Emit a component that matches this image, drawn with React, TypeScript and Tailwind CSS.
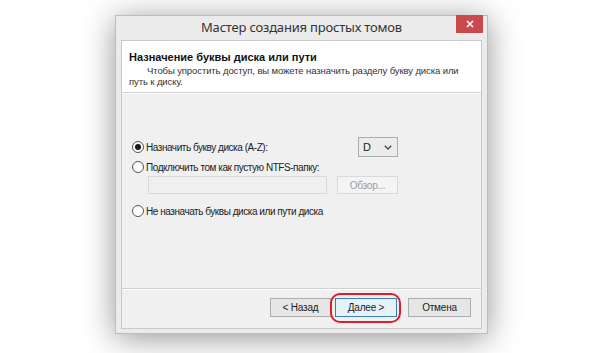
import React from "react";

const Radio: React.FC<{ checked?: boolean }> = ({ checked }) => (
  <span className="flex h-[12px] w-[12px] shrink-0 items-center justify-center rounded-full border border-[#555] bg-white">
    {checked && <span className="h-[6px] w-[6px] rounded-full bg-[#1a1a1a]" />}
  </span>
);

const Button: React.FC<{ label: string; width: string; focused?: boolean }> = ({
  label,
  width,
  focused,
}) => (
  <div
    className={`flex h-[19px] items-center justify-center border text-[10px] tracking-[-0.2px] text-[#222] ${width} ${
      focused ? "border-[#3c7fb1] bg-[#e5f1fb]" : "border-[#adadad] bg-[#e6e6e6]"
    }`}
  >
    {label}
  </div>
);

const App: React.FC = () => {
  return (
    <div
      className="h-[353px] w-[600px] overflow-hidden bg-white pt-[15px] pl-[115px]"
      style={{ fontFamily: '"Liberation Sans", Arial, sans-serif' }}
    >
      <div className="flex h-[319px] w-[373px] flex-col border border-[#bcbcbc] bg-[#ebebeb] shadow-[0_4px_30px_rgba(0,0,0,0.42)]">
        {/* title bar */}
        <div className="relative flex h-[24px] shrink-0 items-center justify-center">
          <span
            className="text-[13px] tracking-[-0.2px] text-[#333]"
            style={{ fontFamily: '"Noto Sans", "Open Sans", sans-serif' }}
          >
            Мастер создания простых томов
          </span>
          <div className="absolute top-[-1px] right-[4px] flex h-[18px] w-[27px] items-center justify-center bg-[#c9494c]">
            <svg width="8" height="8" viewBox="0 0 8 8">
              <path d="M1 1 L7 7 M7 1 L1 7" stroke="white" strokeWidth="1.6" />
            </svg>
          </div>
        </div>

        {/* client area */}
        <div className="mx-[5px] mb-[4px] flex flex-1 flex-col border border-[#c9c9c9] bg-[#f0f0f0]">
          {/* header */}
          <div className="h-[51px] shrink-0 bg-white pt-[10px] pl-[7px]">
            <div className="text-[11px] font-bold leading-[13px] text-[#111]">
              Назначение буквы диска или пути
            </div>
            <div className="mt-[1px] whitespace-nowrap text-[9.5px] leading-[11px] tracking-[-0.1px] text-[#333]">
              <div className="pl-[18px]">
                Чтобы упростить доступ, вы можете назначить разделу букву диска или
              </div>
              <div>путь к диску.</div>
            </div>
          </div>
          <div className="h-px shrink-0 bg-[#cfcfcf]" />
          <div className="h-px shrink-0 bg-white" />

          {/* body */}
          <div className="flex-1 pt-[43px] pl-[10px] text-[10px] tracking-[-0.45px] text-[#222]">
            <div className="w-[266px]">
              <div className="flex h-[20px] items-center justify-between">
                <div className="flex items-center gap-[2px]">
                  <Radio checked />
                  <span>Назначить букву диска (A-Z):</span>
                </div>
                <div className="flex h-[20px] w-[40px] items-center justify-between border border-[#acacac] bg-[#ececec] pr-[5px] pl-[4px]">
                  <span className="text-[11px] tracking-normal">D</span>
                  <svg width="8" height="5" viewBox="0 0 8 5">
                    <path d="M0.8 0.8 L4 4 L7.2 0.8" stroke="#444" strokeWidth="1.3" fill="none" />
                  </svg>
                </div>
              </div>
              <div className="mt-[3px] flex h-[14px] items-center gap-[2px]">
                <Radio />
                <span>Подключить том как пустую NTFS-папку:</span>
              </div>
              <div className="mt-[2px] flex gap-[10px] pl-[16px]">
                <div className="h-[18px] w-[179px] border border-[#d9d9d9] bg-[#f0f0f0]" />
                <div className="flex h-[18px] w-[61px] items-center justify-center border border-[#d9d9d9] bg-[#f4f4f4] tracking-[-0.2px] text-[#9a9a9a]">
                  Обзор...
                </div>
              </div>
              <div className="mt-[10px] flex h-[14px] items-center gap-[2px]">
                <Radio />
                <span>Не назначать буквы диска или пути диска</span>
              </div>
            </div>
          </div>

          <div className="h-px shrink-0 bg-[#cfcfcf]" />
          <div className="h-px shrink-0 bg-white" />

          {/* footer */}
          <div className="flex h-[38px] shrink-0 items-start justify-end pt-[8px] pr-[10px]">
            <Button label="< Назад" width="w-[61px]" />
            <div className="relative ml-[4px]">
              <Button label="Далее >" width="w-[62px]" focused />
              <div className="absolute -top-[5px] -right-[4px] -bottom-[6px] -left-[5px] rounded-[10px] border-2 border-[#dc1e2c]" />
            </div>
            <div className="ml-[11px]">
              <Button label="Отмена" width="w-[63px]" />
            </div>
          </div>
        </div>
      </div>
    </div>
  );
};

export default App;
